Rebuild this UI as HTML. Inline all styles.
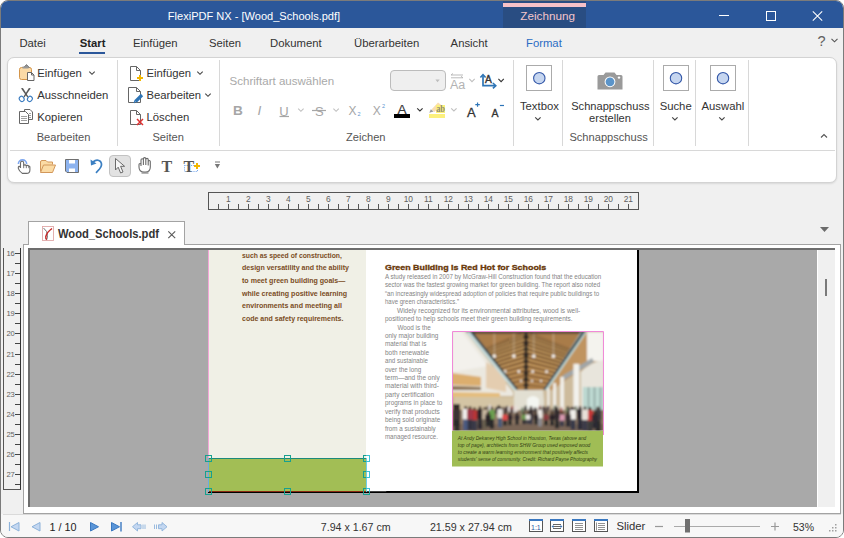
<!DOCTYPE html>
<html><head><meta charset="utf-8"><style>
html,body{margin:0;padding:0;width:844px;height:538px;overflow:hidden;background:#fff}
body{position:relative;font-family:'Liberation Sans', sans-serif}
.a{position:absolute}
.t{position:absolute;white-space:nowrap;line-height:1}
svg{overflow:visible}
</style></head><body>
<div class='a' style='left:0px;top:0px;width:844px;height:538px;background:#f0f0f0;border:1px solid #7b7b7b;box-sizing:border-box;border-radius:8px 8px 8px 8px'></div><div class='a' style='left:1px;top:1px;width:842px;height:27px;background:#2b579a;border-radius:7px 7px 0 0'></div><div class='a' style='left:503px;top:1px;width:83px;height:27px;background:#294d82'></div><div class='a' style='left:503px;top:3px;width:83px;height:4px;background:#f7c1c8'></div><div class='t' style="left:347.60px;width:400px;text-align:center;top:10.30px;font-size:11.7px;color:#f4c6cb;font-weight:400;">Zeichnung</div><div class='t' style="left:54.00px;width:400px;text-align:center;top:10.85px;font-size:11.05px;color:#ffffff;font-weight:400;">FlexiPDF NX - [Wood_Schools.pdf]</div><div class='a' style='left:719px;top:15px;width:10px;height:1px;background:#fff'></div><div class='a' style='left:766px;top:11px;width:9px;height:9px;border:1px solid #fff;box-sizing:border-box;width:10px;height:10px'></div><svg class='a' style='left:812px;top:11px;' width='11' height='11' viewBox='0 0 11 11'><path d='M0.8 0.3L10.2 9.7M10.2 0.3L0.8 9.7' stroke='#fff' stroke-width='1.05'/></svg><div class='t' style="left:19.40px;top:38.13px;font-size:11.3px;color:#333;font-weight:400;">Datei</div><div class='t' style="left:79.70px;top:38.13px;font-size:11.3px;color:#222;font-weight:700;">Start</div><div class='t' style="left:133.00px;top:38.13px;font-size:11.3px;color:#333;font-weight:400;">Einfügen</div><div class='t' style="left:209.00px;top:38.13px;font-size:11.3px;color:#333;font-weight:400;">Seiten</div><div class='t' style="left:270.10px;top:38.13px;font-size:11.3px;color:#333;font-weight:400;">Dokument</div><div class='t' style="left:354.00px;top:38.13px;font-size:11.3px;color:#333;font-weight:400;">Überarbeiten</div><div class='t' style="left:450.60px;top:38.13px;font-size:11.3px;color:#333;font-weight:400;">Ansicht</div><div class='t' style="left:526.00px;top:38.13px;font-size:11.3px;color:#2b6cc4;font-weight:400;">Format</div><div class='a' style='left:79px;top:52px;width:26px;height:2px;background:#2b579a'></div><div class='t' style="left:817.60px;top:34.33px;font-size:14.5px;color:#606060;font-weight:400;">?</div><svg class='a' style='left:831px;top:38px;' width='7' height='5' viewBox='0 0 7 5'><path d='M0.5 0.8L3.5 3.8L6.5 0.8' fill='none' stroke='#555' stroke-width='1.1'/></svg><div class='a' style='left:7px;top:57px;width:830px;height:126px;background:#ffffff;border:1px solid #d3d3d3;box-sizing:border-box;border-radius:7px;box-shadow:0 1px 2px rgba(0,0,0,0.10)'></div><div class='a' style='left:117px;top:60px;width:1px;height:86px;background:#d8d8d8'></div><div class='a' style='left:219px;top:60px;width:1px;height:86px;background:#d8d8d8'></div><div class='a' style='left:513px;top:60px;width:1px;height:86px;background:#d8d8d8'></div><div class='a' style='left:562px;top:60px;width:1px;height:86px;background:#d8d8d8'></div><div class='a' style='left:653px;top:60px;width:1px;height:86px;background:#d8d8d8'></div><div class='a' style='left:695px;top:60px;width:1px;height:86px;background:#d8d8d8'></div><div class='a' style='left:748px;top:60px;width:1px;height:86px;background:#d8d8d8'></div><div class='a' style='left:10px;top:150px;width:825px;height:1px;background:#d8d8d8'></div><div class='t' style="left:37.30px;top:68.03px;font-size:11.3px;color:#333;font-weight:400;">Einfügen</div><div class='t' style="left:37.30px;top:89.93px;font-size:11.3px;color:#333;font-weight:400;">Ausschneiden</div><div class='t' style="left:37.30px;top:112.23px;font-size:11.3px;color:#333;font-weight:400;">Kopieren</div><div class='t' style="left:-136.50px;width:400px;text-align:center;top:131.90px;font-size:11.1px;color:#555;font-weight:400;">Bearbeiten</div><div class='t' style="left:146.50px;top:68.03px;font-size:11.3px;color:#333;font-weight:400;">Einfügen</div><div class='t' style="left:146.50px;top:89.93px;font-size:11.3px;color:#333;font-weight:400;">Bearbeiten</div><div class='t' style="left:146.50px;top:112.23px;font-size:11.3px;color:#333;font-weight:400;">Löschen</div><div class='t' style="left:-31.80px;width:400px;text-align:center;top:131.90px;font-size:11.1px;color:#555;font-weight:400;">Seiten</div><svg class='a' style='left:0px;top:0px;' width='844' height='538' viewBox='0 0 844 538'><path d='M89.3 71.6L92.0 74.3L94.7 71.6' fill='none' stroke='#444' stroke-width='1.1'/><path d='M197.3 71.6L200.0 74.3L202.70000000000002 71.6' fill='none' stroke='#444' stroke-width='1.1'/><path d='M205.3 93.6L208.0 96.3L210.70000000000002 93.6' fill='none' stroke='#444' stroke-width='1.1'/><rect x='19.5' y='67.5' width='12' height='12' rx='2' fill='#fbdaa6' stroke='#d49549'/><path d='M23.5 67.5 L26.5 64.5 L29.5 67.5 Z' fill='#8a8a8a' stroke='#777' stroke-width='0.8'/><rect x='22.5' y='66.5' width='6' height='2' fill='#999'/><path d='M27.5 72.5 H31.5 L34 75 V80.5 H27.5 Z' fill='#fff' stroke='#666'/><path d='M31.5 72.5 V75 H34' fill='none' stroke='#666'/><path d='M21 88.2 L22.9 88 L28.3 96.6 L27.4 97.4 Z' fill='#5a5a5a'/><path d='M30.8 88.2 L28.9 88 L23.5 96.6 L24.4 97.4 Z' fill='#5a5a5a'/><ellipse cx='21.7' cy='98.9' rx='2.3' ry='2.7' transform='rotate(-35 21.7 98.9)' fill='none' stroke='#3b7cc0' stroke-width='1.1'/><ellipse cx='29.9' cy='98.9' rx='2.3' ry='2.7' transform='rotate(35 29.9 98.9)' fill='none' stroke='#3b7cc0' stroke-width='1.1'/><path d='M24.5 109.5 H30 L32.5 112 V119.5 H24.5 Z' fill='#fff' stroke='#666'/><path d='M19.5 111.5 H25.5 L28.5 114.5 V123.5 H19.5 Z' fill='#fff' stroke='#666'/><path d='M21 116.5H27M21 118.5H27M21 120.5H27M29 113.5H31M29 115.5H31M29 117.5H31' stroke='#888' stroke-width='0.8'/><path d='M130.5 66.5 H136.5 L140.5 70.5 V80.5 H130.5 Z' fill='#fff' stroke='#666'/><path d='M136.5 66.5 V70.5 H140.5' fill='none' stroke='#666'/><path d='M137 78H143M140 75V81' stroke='#f2b600' stroke-width='2'/><path d='M128.5 87.5 H136.5 L140.5 91.5 V102.5 H128.5 Z' fill='#fff' stroke='#666'/><path d='M136.5 87.5 V91.5 H140.5' fill='none' stroke='#666'/><path d='M135.5 101.5 L142 95' stroke='#2e74b5' stroke-width='3.2'/><path d='M134 103 L135.5 100' stroke='#2e74b5' stroke-width='1.2'/><path d='M130.5 110.5 H136.5 L140.5 114.5 V124.5 H130.5 Z' fill='#fff' stroke='#666'/><path d='M136.5 110.5 V114.5 H140.5' fill='none' stroke='#666'/><path d='M137 119L143 125M143 119L137 125' stroke='#e03030' stroke-width='1.5'/></svg><div class='t' style="left:229.50px;top:75.82px;font-size:11.55px;color:#a9a9a9;font-weight:400;">Schriftart auswählen</div><div class='a' style='left:390px;top:70px;width:56px;height:21px;background:#efefef;border:1px solid #bcbcbc;box-sizing:border-box;border-radius:4px'></div><div class='t' style="left:165.80px;width:400px;text-align:center;top:131.90px;font-size:11.1px;color:#555;font-weight:400;">Zeichen</div><div class='t' style="left:233.00px;top:104.29px;font-size:13.6px;color:#a6a6a6;font-weight:700;">B</div><div class='t' style="left:257.50px;top:104.29px;font-size:13.6px;color:#a6a6a6;font-weight:400;font-style:italic;">I</div><div class='t' style="left:279.30px;top:104.80px;font-size:13px;color:#a6a6a6;font-weight:400;">U</div><div class='t' style="left:315.00px;top:104.80px;font-size:13px;color:#a6a6a6;font-weight:400;">S</div><div class='t' style="left:348.60px;top:104.84px;font-size:12px;color:#a6a6a6;font-weight:400;">X</div><div class='t' style="left:357.40px;top:112.14px;font-size:5.5px;color:#5b95d0;font-weight:400;">2</div><div class='t' style="left:372.80px;top:104.84px;font-size:12px;color:#a6a6a6;font-weight:400;">X</div><div class='t' style="left:382.00px;top:103.94px;font-size:5.5px;color:#5b95d0;font-weight:400;">2</div><div class='t' style="left:397.50px;top:103.19px;font-size:13.6px;color:#3a3a3a;font-weight:400;-webkit-text-stroke:0.15px #333;">A</div><div class='t' style="left:467.00px;top:106.30px;font-size:13px;color:#333;font-weight:400;-webkit-text-stroke:0.3px #333;">A</div><div class='t' style="left:491.40px;top:108.41px;font-size:10.5px;color:#333;font-weight:400;-webkit-text-stroke:0.3px #333;">A</div><div class='t' style="left:450.00px;top:79.02px;font-size:12.5px;color:#b3b3b3;font-weight:400;">Aa</div><div class='t' style="left:485.00px;top:74.77px;font-size:10.2px;color:#333;font-weight:400;-webkit-text-stroke:0.4px #333;">A</div><svg class='a' style='left:0px;top:0px;' width='844' height='538' viewBox='0 0 844 538'><path d='M279.5 116.5H289' stroke='#a6a6a6' stroke-width='1.2'/><path d='M312 110.5H326' stroke='#a6a6a6' stroke-width='1.2'/><path d='M298.2 108.6L300.9 111.3L303.59999999999997 108.6' fill='none' stroke='#c0c0c0' stroke-width='1.1'/><path d='M333.4 108.6L336.09999999999997 111.3L338.79999999999995 108.6' fill='none' stroke='#c0c0c0' stroke-width='1.1'/><path d='M469.3 78.9L472.0 81.60000000000001L474.7 78.9' fill='none' stroke='#c0c0c0' stroke-width='1.1'/><path d='M498.4 78.9L501.09999999999997 81.60000000000001L503.79999999999995 78.9' fill='none' stroke='#333' stroke-width='1.1'/><path d='M417.2 108.3L419.9 111.0L422.59999999999997 108.3' fill='none' stroke='#333' stroke-width='1.1'/><path d='M451.2 108.3L453.9 111.0L456.59999999999997 108.3' fill='none' stroke='#c0c0c0' stroke-width='1.1'/><path d='M435.4 79.6L439.7 79.6L437.55 82.2Z' fill='#bdbdbd'/><path d='M451 75H463M451 77.8H463M453 73.5L451 75M461 76.3L463 77.8' fill='none' stroke='#b3b3b3' stroke-width='0.9'/><path d='M483 75.5V85.7H495' fill='none' stroke='#2e75b6' stroke-width='1.7'/><path d='M480.4 77.6L483 74.6L485.6 77.6M492.9 83L495.8 85.7L492.9 88.4' fill='none' stroke='#2e75b6' stroke-width='1.6'/><rect x='394' y='114' width='16' height='4' fill='#000'/><path d='M431.5 109.5 L438 102.5 L441 104.8 L434.5 112 Z' fill='#f9deb0'/><path d='M429.3 112.8 L430.8 109.3 L433.6 111.6Z' fill='#9a9a9a'/><rect x='436' y='105' width='9' height='8' fill='#fcf07c'/><rect x='429' y='114' width='16' height='4' fill='#fcf07c'/><text x='436.2' y='112.3' textLength='8.8' lengthAdjust='spacingAndGlyphs' font-family='Liberation Serif' font-weight='700' font-size='9.6' fill='#8f8c72'>ab</text><path d='M475.3 104.6H479.8M477.55 102.4V106.8' stroke='#2c74b8' stroke-width='1.2'/><path d='M499.9 105.5H504' stroke='#2c74b8' stroke-width='1.2'/></svg><div class='a' style='left:526px;top:65px;width:26px;height:26px;border:1px solid #ababab;box-sizing:border-box;background:#fff'></div><div class='a' style='left:663px;top:65px;width:26px;height:26px;border:1px solid #ababab;box-sizing:border-box;background:#fff'></div><div class='a' style='left:710px;top:65px;width:26px;height:26px;border:1px solid #ababab;box-sizing:border-box;background:#fff'></div><svg class='a' style='left:0px;top:0px;' width='844' height='538' viewBox='0 0 844 538'><circle cx='539.3' cy='78.2' r='5.7' fill='#c6d6f0' stroke='#3458a8' stroke-width='1.1'/><circle cx='676' cy='78.2' r='5.7' fill='#c6d6f0' stroke='#3458a8' stroke-width='1.1'/><circle cx='723' cy='78.2' r='5.7' fill='#c6d6f0' stroke='#3458a8' stroke-width='1.1'/><path d='M535.2 117.3L537.9000000000001 120.0L540.6 117.3' fill='none' stroke='#444' stroke-width='1.1'/><path d='M672.2 117.3L674.9000000000001 120.0L677.6 117.3' fill='none' stroke='#444' stroke-width='1.1'/><path d='M719.2 117.3L721.9000000000001 120.0L724.6 117.3' fill='none' stroke='#444' stroke-width='1.1'/><path d='M821 137.5L824 134.5L827 137.5' fill='none' stroke='#555' stroke-width='1.1'/><path d='M597.5 76.5 Q597.5 75 599 75 H603.5 L605.5 72.5 H614.5 L616.5 75 H621 Q622.5 75 622.5 76.5 V89.5 H597.5 Z' fill='#9a9a9a'/><circle cx='610' cy='81.8' r='5.4' fill='#fff'/><circle cx='610' cy='81.8' r='4.4' fill='#5b94c9'/><circle cx='619' cy='77.6' r='1.2' fill='#fff'/></svg><div class='t' style="left:339.40px;width:400px;text-align:center;top:100.93px;font-size:11.3px;color:#333;font-weight:400;">Textbox</div><div class='t' style="left:410.40px;width:400px;text-align:center;top:101.10px;font-size:11.1px;color:#333;font-weight:400;">Schnappschuss</div><div class='t' style="left:410.00px;width:400px;text-align:center;top:113.40px;font-size:11.1px;color:#333;font-weight:400;">erstellen</div><div class='t' style="left:408.60px;width:400px;text-align:center;top:131.80px;font-size:11.1px;color:#555;font-weight:400;">Schnappschuss</div><div class='t' style="left:475.70px;width:400px;text-align:center;top:100.93px;font-size:11.3px;color:#333;font-weight:400;">Suche</div><div class='t' style="left:522.90px;width:400px;text-align:center;top:100.93px;font-size:11.3px;color:#333;font-weight:400;">Auswahl</div><div class='a' style='left:109px;top:155px;width:22px;height:22px;background:#e2e2e2;border:1px solid #c2c2c2;box-sizing:border-box;border-radius:4px'></div><svg class='a' style='left:0px;top:0px;' width='844' height='538' viewBox='0 0 844 538'><path d='M18.4 164 A4.1 4.1 0 0 1 26.6 164' fill='none' stroke='#7ea7ef' stroke-width='1.6'/><path d='M20.5 168 V163 Q20.5 161.2 22.1 161.2 Q23.7 161.2 23.7 163 V165.3 Q25.5 164.4 26.3 165.6 Q28 164.9 28.8 166.2 Q29.9 166 29.9 167.5 V170 Q29.9 173.4 26.5 173.4 H22.3 Q19.2 171.2 18.4 168.6 Q18 166.6 19.2 166.4 Q20 166.3 20.5 167.5' fill='#fff' stroke='#6a6a6a' stroke-width='1.1'/><path d='M23.7 165.3V168.2M26.3 165.6V168.2M28.8 166.2V168.2' stroke='#6a6a6a' stroke-width='0.9'/><path d='M40.5 171.5 V162 Q40.5 160.5 42 160.5 H46 L47.5 162 H52.5 V164.5' fill='#fbdba5' stroke='#d2975a'/><path d='M40.5 172.5 L43.5 165 H55.5 L52.5 172.5 Z' fill='#fbdba5' stroke='#d2975a'/><path d='M65.5 159.5 H78.5 V172.5 H67 L65.5 171 Z' fill='#8db3ef' stroke='#6f6f6f'/><rect x='69' y='160' width='6' height='3.5' fill='#fff'/><rect x='69' y='168.5' width='6' height='3.5' fill='#fff'/><path d='M93 162 Q97 158.5 100.5 161.5 Q103 165 99.5 169 L96 172.8' fill='none' stroke='#3b7fc2' stroke-width='1.7'/><path d='M90.5 159.5 L91 165.5 L96.5 163.5 Z' fill='#3b7fc2'/><path d='M115.5 158.5 V170 L118.2 167.2 L120.6 173 L123 172 L120.6 166.3 H124.6 Z' fill='#f6f6f6' stroke='#6a6a6a' stroke-width='1'/><path d='M141 166 V160 Q141 158.8 142.2 158.8 Q143.4 158.8 143.4 160 V165 V158.8 Q143.4 157.6 144.6 157.6 Q145.8 157.6 145.8 158.8 V165 V159.6 Q145.8 158.4 147 158.4 Q148.2 158.4 148.2 159.6 V165.5 V161.5 Q148.2 160.5 149.3 160.5 Q150.3 160.5 150.3 161.5 V167 Q150.3 172 145.5 172 H144 Q139 172 139 167 V164.5 Q139 163.5 140 163.5 Q141 163.5 141 164.8' fill='#fff' stroke='#6a6a6a' stroke-width='1.1'/><path d='M141.5 173 H148.5' stroke='#6a6a6a'/><rect x='184.5' y='165.5' width='13' height='6' fill='none' stroke='#5b95e8' stroke-width='0.9' stroke-dasharray='1 1.2'/><path d='M194 166H200M197 163V169' stroke='#f3b800' stroke-width='2'/><path d='M215 162H220' stroke='#777' stroke-width='1'/><path d='M214.8 164 H220 L217.4 168.5 Z' fill='#777'/></svg><div class='t' style="left:161.50px;top:159.06px;font-size:16px;color:#555;font-weight:700;font-family:'Liberation Serif',serif;">T</div><div class='t' style="left:183.50px;top:159.06px;font-size:16px;color:#555;font-weight:700;font-family:'Liberation Serif',serif;">T</div><svg class='a' style='left:0px;top:0px;' width='844' height='538' viewBox='0 0 844 538'><path d='M194.2 166H199.8M197 163.2V168.8' stroke='#f3b800' stroke-width='2'/></svg><div class='a' style='left:208px;top:192px;width:431px;height:18px;border:1px solid #555;border-bottom:1px solid #555;box-sizing:border-box'></div><svg class='a' style='left:0px;top:0px;' width='844' height='538' viewBox='0 0 844 538'><path d='M218.5 204V209M228.5 204V209M238.5 204V209M248.5 204V209M258.5 204V209M268.5 204V209M278.5 204V209M288.5 204V209M298.5 204V209M308.5 204V209M318.5 204V209M328.5 204V209M338.5 204V209M348.5 204V209M358.5 204V209M368.5 204V209M378.5 204V209M388.5 204V209M398.5 204V209M408.5 204V209M418.5 204V209M428.5 204V209M438.5 204V209M448.5 204V209M458.5 204V209M468.5 204V209M478.5 204V209M488.5 204V209M498.5 204V209M508.5 204V209M518.5 204V209M528.5 204V209M538.5 204V209M548.5 204V209M558.5 204V209M568.5 204V209M578.5 204V209M588.5 204V209M598.5 204V209M608.5 204V209M618.5 204V209M628.5 204V209' stroke='#555' stroke-width='1'/></svg><div class='t' style="left:28.30px;width:400px;text-align:center;top:194.99px;font-size:8.4px;color:#606060;font-weight:400;">1</div><div class='t' style="left:48.30px;width:400px;text-align:center;top:194.99px;font-size:8.4px;color:#606060;font-weight:400;">2</div><div class='t' style="left:68.30px;width:400px;text-align:center;top:194.99px;font-size:8.4px;color:#606060;font-weight:400;">3</div><div class='t' style="left:88.30px;width:400px;text-align:center;top:194.99px;font-size:8.4px;color:#606060;font-weight:400;">4</div><div class='t' style="left:108.30px;width:400px;text-align:center;top:194.99px;font-size:8.4px;color:#606060;font-weight:400;">5</div><div class='t' style="left:128.30px;width:400px;text-align:center;top:194.99px;font-size:8.4px;color:#606060;font-weight:400;">6</div><div class='t' style="left:148.30px;width:400px;text-align:center;top:194.99px;font-size:8.4px;color:#606060;font-weight:400;">7</div><div class='t' style="left:168.30px;width:400px;text-align:center;top:194.99px;font-size:8.4px;color:#606060;font-weight:400;">8</div><div class='t' style="left:188.30px;width:400px;text-align:center;top:194.99px;font-size:8.4px;color:#606060;font-weight:400;">9</div><div class='t' style="left:208.30px;width:400px;text-align:center;top:194.99px;font-size:8.4px;color:#606060;font-weight:400;">10</div><div class='t' style="left:228.30px;width:400px;text-align:center;top:194.99px;font-size:8.4px;color:#606060;font-weight:400;">11</div><div class='t' style="left:248.30px;width:400px;text-align:center;top:194.99px;font-size:8.4px;color:#606060;font-weight:400;">12</div><div class='t' style="left:268.30px;width:400px;text-align:center;top:194.99px;font-size:8.4px;color:#606060;font-weight:400;">13</div><div class='t' style="left:288.30px;width:400px;text-align:center;top:194.99px;font-size:8.4px;color:#606060;font-weight:400;">14</div><div class='t' style="left:308.30px;width:400px;text-align:center;top:194.99px;font-size:8.4px;color:#606060;font-weight:400;">15</div><div class='t' style="left:328.30px;width:400px;text-align:center;top:194.99px;font-size:8.4px;color:#606060;font-weight:400;">16</div><div class='t' style="left:348.30px;width:400px;text-align:center;top:194.99px;font-size:8.4px;color:#606060;font-weight:400;">17</div><div class='t' style="left:368.30px;width:400px;text-align:center;top:194.99px;font-size:8.4px;color:#606060;font-weight:400;">18</div><div class='t' style="left:388.30px;width:400px;text-align:center;top:194.99px;font-size:8.4px;color:#606060;font-weight:400;">19</div><div class='t' style="left:408.30px;width:400px;text-align:center;top:194.99px;font-size:8.4px;color:#606060;font-weight:400;">20</div><div class='t' style="left:428.30px;width:400px;text-align:center;top:194.99px;font-size:8.4px;color:#606060;font-weight:400;">21</div><svg class='a' style='left:820px;top:227px;' width='9' height='5' viewBox='0 0 9 5'><path d='M0 0H9L4.5 5Z' fill='#6b6b6b'/></svg><div class='a' style='left:23px;top:244px;width:818px;height:270px;background:#fff;border:1px solid #a3a3a3;box-sizing:border-box'></div><div class='a' style='left:28px;top:221px;width:157px;height:24px;background:#fff;border:1px solid #a3a3a3;border-bottom:none;box-sizing:border-box'></div><svg class='a' style='left:0px;top:0px;' width='844' height='538' viewBox='0 0 844 538'><rect x='42.5' y='226.5' width='11' height='14' fill='#fff' stroke='#e0a8a8' stroke-width='0.9'/><path d='M43.5 228 Q47.5 231 47.5 235.5 Q47.5 238 46.5 240' fill='none' stroke='#777' stroke-width='1'/><path d='M52 228.5 Q47 232 45.8 236.5 Q45.5 239 46.8 239.5' fill='none' stroke='#c62828' stroke-width='1.5'/><path d='M168.3 231.3L175.2 238.2M175.2 231.3L168.3 238.2' stroke='#5a5a5a' stroke-width='1.1'/></svg><svg class='a' style='left:0;top:0' width='844' height='538'><text x='58' y='237.8' textLength='101' lengthAdjust='spacingAndGlyphs' font-family='Liberation Sans' font-size='12.4' font-weight='700' font-style='normal' fill='#333'>Wood_Schools.pdf</text></svg><div class='a' style='left:3px;top:248px;width:18px;height:242px;border:1px solid #555;border-top:none;border-right:1px solid #333;box-sizing:border-box;background:#f0f0f0'></div><svg class='a' style='left:0px;top:0px;' width='844' height='538' viewBox='0 0 844 538'><path d='M15 253.5H20M15 263.5H20M15 273.5H20M15 283.5H20M15 293.5H20M15 303.5H20M15 313.5H20M15 323.5H20M15 333.5H20M15 343.5H20M15 354.5H20M15 364.5H20M15 374.5H20M15 384.5H20M15 394.5H20M15 404.5H20M15 414.5H20M15 424.5H20M15 434.5H20M15 444.5H20M15 454.5H20M15 464.5H20M15 474.5H20M15 484.5H20' stroke='#444' stroke-width='1'/></svg><div class='t' style="left:-189.40px;width:400px;text-align:center;top:250.47px;font-size:7.6px;color:#606060;font-weight:400;">16</div><div class='t' style="left:-189.40px;width:400px;text-align:center;top:270.47px;font-size:7.6px;color:#606060;font-weight:400;">17</div><div class='t' style="left:-189.40px;width:400px;text-align:center;top:290.47px;font-size:7.6px;color:#606060;font-weight:400;">18</div><div class='t' style="left:-189.40px;width:400px;text-align:center;top:310.47px;font-size:7.6px;color:#606060;font-weight:400;">19</div><div class='t' style="left:-189.40px;width:400px;text-align:center;top:330.47px;font-size:7.6px;color:#606060;font-weight:400;">20</div><div class='t' style="left:-189.40px;width:400px;text-align:center;top:351.47px;font-size:7.6px;color:#606060;font-weight:400;">21</div><div class='t' style="left:-189.40px;width:400px;text-align:center;top:371.47px;font-size:7.6px;color:#606060;font-weight:400;">22</div><div class='t' style="left:-189.40px;width:400px;text-align:center;top:391.47px;font-size:7.6px;color:#606060;font-weight:400;">23</div><div class='t' style="left:-189.40px;width:400px;text-align:center;top:411.47px;font-size:7.6px;color:#606060;font-weight:400;">24</div><div class='t' style="left:-189.40px;width:400px;text-align:center;top:431.47px;font-size:7.6px;color:#606060;font-weight:400;">25</div><div class='t' style="left:-189.40px;width:400px;text-align:center;top:451.47px;font-size:7.6px;color:#606060;font-weight:400;">26</div><div class='t' style="left:-189.40px;width:400px;text-align:center;top:471.47px;font-size:7.6px;color:#606060;font-weight:400;">27</div><div class='a' style='left:28px;top:248px;width:807px;height:259px;background:#a9a9a9;border-top:2px solid #6d6d6d;border-left:2px solid #6d6d6d;box-sizing:border-box'></div><div class='a' style='left:817px;top:250px;width:18px;height:257px;background:#f0f0f0;border-left:1px solid #fff;box-sizing:border-box'></div><div class='a' style='left:825px;top:279px;width:2px;height:17px;background:#7a7a7a'></div><div class='a' style='left:208px;top:250px;width:431px;height:243px;background:#fff;border-right:2px solid #000;border-bottom:2px solid #000;box-sizing:border-box'></div><div class='a' style='left:208px;top:250px;width:1px;height:241px;background:#f3a6d8'></div><div class='a' style='left:209px;top:250px;width:157px;height:208px;background:#f0f0e6'></div><svg class='a' style='left:0px;top:0px;' width='844' height='538' viewBox='0 0 844 538'><text x='242' y='258.1' textLength='99.89999999999998' lengthAdjust='spacingAndGlyphs' font-family='Liberation Sans' font-size='7.7' font-weight='700' font-style='normal' fill='#7b4d1e' >such as speed of construction,</text><text x='242' y='270' textLength='107' lengthAdjust='spacingAndGlyphs' font-family='Liberation Sans' font-size='7.7' font-weight='700' font-style='normal' fill='#7b4d1e' >design versatility and the ability</text><text x='242' y='283' textLength='103.30000000000001' lengthAdjust='spacingAndGlyphs' font-family='Liberation Sans' font-size='7.7' font-weight='700' font-style='normal' fill='#7b4d1e' >to meet green building goals—</text><text x='242' y='295.9' textLength='105.19999999999999' lengthAdjust='spacingAndGlyphs' font-family='Liberation Sans' font-size='7.7' font-weight='700' font-style='normal' fill='#7b4d1e' >while creating positive learning</text><text x='242' y='307.8' textLength='99.89999999999998' lengthAdjust='spacingAndGlyphs' font-family='Liberation Sans' font-size='7.7' font-weight='700' font-style='normal' fill='#7b4d1e' >environments and meeting all</text><text x='242' y='321.2' textLength='101.39999999999998' lengthAdjust='spacingAndGlyphs' font-family='Liberation Sans' font-size='7.7' font-weight='700' font-style='normal' fill='#7b4d1e' >code and safety requirements.</text><text x='385' y='270.3' textLength='161.2' lengthAdjust='spacingAndGlyphs' font-family='Liberation Sans' font-size='7.9' font-weight='900' font-style='normal' fill='#6a3a0c' stroke='#6a3a0c' stroke-width='0.35'>Green Building is Red Hot for Schools</text><text x='385' y='279.3' textLength='216.20000000000005' lengthAdjust='spacingAndGlyphs' font-family='Liberation Sans' font-size='7.2' font-weight='400' font-style='normal' fill='#848484' >A study released in 2007 by McGraw-Hill Construction found that the education</text><text x='385' y='287.0' textLength='215.20000000000005' lengthAdjust='spacingAndGlyphs' font-family='Liberation Sans' font-size='7.2' font-weight='400' font-style='normal' fill='#848484' >sector was the fastest growing market for green building. The report also noted</text><text x='385' y='295.9' textLength='214.20000000000005' lengthAdjust='spacingAndGlyphs' font-family='Liberation Sans' font-size='7.2' font-weight='400' font-style='normal' fill='#848484' >“an increasingly widespread adoption of policies that require public buildings to</text><text x='385' y='303.8' textLength='74' lengthAdjust='spacingAndGlyphs' font-family='Liberation Sans' font-size='7.2' font-weight='400' font-style='normal' fill='#848484' >have green characteristics.”</text><text x='397' y='312.9' textLength='183.29999999999995' lengthAdjust='spacingAndGlyphs' font-family='Liberation Sans' font-size='7.2' font-weight='400' font-style='normal' fill='#848484' >Widely recognized for its environmental attributes, wood is well-</text><text x='385' y='320.6' textLength='187.5' lengthAdjust='spacingAndGlyphs' font-family='Liberation Sans' font-size='7.2' font-weight='400' font-style='normal' fill='#848484' >positioned to help schools meet their green building requirements.</text><text x='397.4' y='329.5' textLength='33.400000000000034' lengthAdjust='spacingAndGlyphs' font-family='Liberation Sans' font-size='7.2' font-weight='400' font-style='normal' fill='#848484' >Wood is the</text><text x='385' y='338.0' textLength='53.39999999999998' lengthAdjust='spacingAndGlyphs' font-family='Liberation Sans' font-size='7.2' font-weight='400' font-style='normal' fill='#848484' >only major building</text><text x='385' y='346.29999999999995' textLength='41.39999999999998' lengthAdjust='spacingAndGlyphs' font-family='Liberation Sans' font-size='7.2' font-weight='400' font-style='normal' fill='#848484' >material that is</text><text x='385' y='354.7' textLength='44' lengthAdjust='spacingAndGlyphs' font-family='Liberation Sans' font-size='7.2' font-weight='400' font-style='normal' fill='#848484' >both renewable</text><text x='385' y='363.0' textLength='42.89999999999998' lengthAdjust='spacingAndGlyphs' font-family='Liberation Sans' font-size='7.2' font-weight='400' font-style='normal' fill='#848484' >and sustainable</text><text x='385' y='371.9' textLength='36.19999999999999' lengthAdjust='spacingAndGlyphs' font-family='Liberation Sans' font-size='7.2' font-weight='400' font-style='normal' fill='#848484' >over the long</text><text x='385' y='379.9' textLength='54.69999999999999' lengthAdjust='spacingAndGlyphs' font-family='Liberation Sans' font-size='7.2' font-weight='400' font-style='normal' fill='#848484' >term—and the only</text><text x='385' y='388.2' textLength='54' lengthAdjust='spacingAndGlyphs' font-family='Liberation Sans' font-size='7.2' font-weight='400' font-style='normal' fill='#848484' >material with third-</text><text x='385' y='396.59999999999997' textLength='49' lengthAdjust='spacingAndGlyphs' font-family='Liberation Sans' font-size='7.2' font-weight='400' font-style='normal' fill='#848484' >party certification</text><text x='385' y='404.9' textLength='57.39999999999998' lengthAdjust='spacingAndGlyphs' font-family='Liberation Sans' font-size='7.2' font-weight='400' font-style='normal' fill='#848484' >programs in place to</text><text x='385' y='413.79999999999995' textLength='54.69999999999999' lengthAdjust='spacingAndGlyphs' font-family='Liberation Sans' font-size='7.2' font-weight='400' font-style='normal' fill='#848484' >verify that products</text><text x='385' y='422.0' textLength='55.19999999999999' lengthAdjust='spacingAndGlyphs' font-family='Liberation Sans' font-size='7.2' font-weight='400' font-style='normal' fill='#848484' >being sold originate</text><text x='385' y='430.5' textLength='50.69999999999999' lengthAdjust='spacingAndGlyphs' font-family='Liberation Sans' font-size='7.2' font-weight='400' font-style='normal' fill='#848484' >from a sustainably</text><text x='385' y='438.79999999999995' textLength='53' lengthAdjust='spacingAndGlyphs' font-family='Liberation Sans' font-size='7.2' font-weight='400' font-style='normal' fill='#848484' >managed resource.</text><rect x='452' y='430.5' width='151' height='36' fill='#a0bd55'/><text x='457.8' y='439.7' textLength='128.40000000000003' lengthAdjust='spacingAndGlyphs' font-family='Liberation Sans' font-size='6.1' font-weight='400' font-style='italic' fill='#334116' >At Andy Dekaney High School in Houston, Texas (above and</text><text x='457.8' y='446.9' textLength='132.49999999999994' lengthAdjust='spacingAndGlyphs' font-family='Liberation Sans' font-size='6.1' font-weight='400' font-style='italic' fill='#334116' >top of page), architects from SHW Group used exposed wood</text><text x='457.8' y='454.1' textLength='130.2' lengthAdjust='spacingAndGlyphs' font-family='Liberation Sans' font-size='6.1' font-weight='400' font-style='italic' fill='#334116' >to create a warm learning environment that positively affects</text><text x='457.8' y='461.3' textLength='139.2' lengthAdjust='spacingAndGlyphs' font-family='Liberation Sans' font-size='6.1' font-weight='400' font-style='italic' fill='#334116' >students' sense of community. Credit: Richard Payne Photography</text></svg><svg class='a' style='left:0px;top:0px;' width='844' height='538' viewBox='0 0 844 538'><defs><clipPath id='pc'><rect x='453' y='332' width='150' height='98.5'/></clipPath><clipPath id='cc'><polygon points='471,332 582,332 543,390 515,390'/></clipPath><filter id='bl' x='440' y='320' width='180' height='125' filterUnits='userSpaceOnUse'><feGaussianBlur stdDeviation='0.9'/></filter></defs><g clip-path='url(#pc)'><g filter='url(#bl)'><rect x='450' y='330' width='156' height='102' fill='#c8b08a'/><g clip-path='url(#cc)'><rect x='460' y='330' width='130' height='62' fill='#a97c4a'/><path d='M484.7 350.0 L526 333.0 L569.9 350.0' fill='none' stroke='#674526' stroke-width='2.80'/><path d='M484.9 350.3 L526 333.9 L569.7 350.3' fill='none' stroke='#d2a86a' stroke-width='2.24'/><path d='M485.4 351.0 L526 335.1 L569.3 351.0' fill='none' stroke='#674526' stroke-width='2.63'/><path d='M486.0 351.8 L526 336.5 L568.7 351.8' fill='none' stroke='#d2a86a' stroke-width='2.10'/><path d='M486.7 352.7 L526 338.0 L568.1 352.7' fill='none' stroke='#674526' stroke-width='2.46'/><path d='M487.5 353.7 L526 339.6 L567.4 353.7' fill='none' stroke='#d2a86a' stroke-width='1.97'/><path d='M488.3 354.9 L526 341.3 L566.6 354.9' fill='none' stroke='#674526' stroke-width='2.29'/><path d='M489.2 356.0 L526 343.1 L565.8 356.0' fill='none' stroke='#d2a86a' stroke-width='1.83'/><path d='M490.2 357.3 L526 344.9 L565.0 357.3' fill='none' stroke='#674526' stroke-width='2.12'/><path d='M491.2 358.6 L526 346.8 L564.1 358.6' fill='none' stroke='#d2a86a' stroke-width='1.70'/><path d='M492.2 360.0 L526 348.8 L563.2 360.0' fill='none' stroke='#674526' stroke-width='1.95'/><path d='M493.3 361.4 L526 350.7 L562.2 361.4' fill='none' stroke='#d2a86a' stroke-width='1.56'/><path d='M494.4 362.9 L526 352.8 L561.3 362.9' fill='none' stroke='#674526' stroke-width='1.78'/><path d='M495.6 364.4 L526 354.9 L560.2 364.4' fill='none' stroke='#d2a86a' stroke-width='1.43'/><path d='M496.7 365.9 L526 357.0 L559.2 365.9' fill='none' stroke='#674526' stroke-width='1.62'/><path d='M497.9 367.5 L526 359.1 L558.1 367.5' fill='none' stroke='#d2a86a' stroke-width='1.29'/><path d='M499.2 369.1 L526 361.3 L557.0 369.1' fill='none' stroke='#674526' stroke-width='1.45'/><path d='M500.4 370.8 L526 363.6 L555.9 370.8' fill='none' stroke='#d2a86a' stroke-width='1.16'/><path d='M501.7 372.5 L526 365.8 L554.8 372.5' fill='none' stroke='#674526' stroke-width='1.28'/><path d='M503.0 374.2 L526 368.1 L553.6 374.2' fill='none' stroke='#d2a86a' stroke-width='1.02'/><path d='M504.3 375.9 L526 370.5 L552.5 375.9' fill='none' stroke='#674526' stroke-width='1.11'/><path d='M505.7 377.7 L526 372.8 L551.3 377.7' fill='none' stroke='#d2a86a' stroke-width='0.89'/><path d='M507.0 379.5 L526 375.2 L550.1 379.5' fill='none' stroke='#674526' stroke-width='0.94'/><path d='M508.4 381.3 L526 377.6 L548.8 381.3' fill='none' stroke='#d2a86a' stroke-width='0.75'/><path d='M509.8 383.2 L526 380.0 L547.6 383.2' fill='none' stroke='#674526' stroke-width='0.77'/><path d='M511.3 385.1 L526 382.5 L546.3 385.1' fill='none' stroke='#d2a86a' stroke-width='0.62'/><path d='M512.7 387.0 L526 385.0 L545.0 387.0' fill='none' stroke='#674526' stroke-width='0.60'/><path d='M514.2 388.9 L526 387.5 L543.7 388.9' fill='none' stroke='#d2a86a' stroke-width='0.48'/><rect x='524.6' y='333' width='2.8' height='57' fill='#2e2a26'/><rect x='523.5' y='336' width='5' height='2.2' fill='#222'/><rect x='523.5' y='342' width='5' height='2.2' fill='#222'/><rect x='523.5' y='348' width='5' height='2.2' fill='#222'/><rect x='523.5' y='354' width='5' height='2.2' fill='#222'/><rect x='523.5' y='360' width='5' height='2.2' fill='#222'/><rect x='523.5' y='366' width='5' height='2.2' fill='#222'/><rect x='523.5' y='372' width='5' height='2.2' fill='#222'/><rect x='523.5' y='378' width='5' height='2.2' fill='#222'/><rect x='523.5' y='384' width='5' height='2.2' fill='#222'/></g><line x1='494.3' y1='333' x2='494.3' y2='356.2' stroke='#e8dcc8' stroke-width='0.5'/><line x1='513.9' y1='333' x2='513.9' y2='356.2' stroke='#e8dcc8' stroke-width='0.5'/><line x1='533.8' y1='333' x2='533.8' y2='356.2' stroke='#e8dcc8' stroke-width='0.5'/><line x1='553.4' y1='333' x2='553.4' y2='356.2' stroke='#e8dcc8' stroke-width='0.5'/><circle cx='494.3' cy='356.2' r='1.6' fill='#ffffff'/><circle cx='513.9' cy='356.2' r='1.6' fill='#ffffff'/><circle cx='533.8' cy='356.2' r='1.6' fill='#ffffff'/><circle cx='553.4' cy='356.2' r='1.6' fill='#ffffff'/><circle cx='505.1' cy='371.6' r='1.3' fill='#ffffff'/><circle cx='518.8' cy='371.6' r='1.3' fill='#ffffff'/><circle cx='532.7' cy='371.6' r='1.3' fill='#ffffff'/><circle cx='546.6' cy='371.6' r='1.3' fill='#ffffff'/><circle cx='521' cy='381' r='1' fill='#ffffff'/><circle cx='532' cy='381' r='1' fill='#ffffff'/><circle cx='541' cy='381' r='1' fill='#ffffff'/><rect x='466' y='331' width='120' height='2.5' fill='#3c3834'/><polygon points='452,331 465,331 513,392 513,396 452,396' fill='#ebe8df'/><polygon points='452,331 461,331 488,366 452,372' fill='#f3f1ec'/><polygon points='486,362 506,374 506,392 486,388' fill='#e4cdb0'/><polygon points='466,332 471,332 517,389 514,391' fill='#c6dcdc'/><polygon points='470,332 473,332 518,389 516.5,390' fill='#34444a'/><polygon points='452,373 481,377 481,386 452,385' fill='#dcae6e'/><polygon points='452,386 481,387 481,390 452,390' fill='#8a7050'/><polygon points='452,392 500,393 500,397.5 452,397' fill='#e4bd7e'/><polygon points='478,398 521,400 521,403.5 478,403' fill='#dcb474'/><rect x='454' y='397' width='66' height='12' fill='#d4c4a4'/><rect x='514' y='390' width='30' height='20' fill='#e2dfd2'/><path d='M527 409 V399 Q533 393 539 399 V409 Z' fill='#f4f6f2'/><polygon points='582,332 604,332 604,412 545,412 543,390' fill='#cdbb9c'/><polygon points='581,332 587,332 547,390 544,390' fill='#c0dcdc'/><polygon points='582,332 585,332 545,390 543,390' fill='#2c3e48'/><polygon points='587,332 604,332 604,356 566,380 552,390 548,390' fill='#c09460'/><polygon points='587,332 604,332 604,361 587,361' fill='#f4f3ee'/><polygon points='562,376 592,358 594,362 564,380' fill='#a0a6a8'/><path d='M581 420 V372 Q590 362 604 360 V420 Z' fill='#e8e5dc'/><rect x='583' y='387' width='21' height='32' fill='#bcd8d0'/><rect x='588' y='387' width='0.8' height='32' fill='#607070'/><rect x='594' y='387' width='0.8' height='32' fill='#607070'/><rect x='600' y='387' width='0.8' height='32' fill='#607070'/><rect x='573.4' y='363.8' width='5.9' height='50.19999999999999' fill='#f2f1ec'/><rect x='560.3' y='376.9' width='3.6' height='37.10000000000002' fill='#f2f1ec'/><rect x='553.2' y='383' width='2.8' height='31' fill='#f2f1ec'/><rect x='547.3' y='388' width='2.2' height='26' fill='#f2f1ec'/><rect x='452' y='410' width='152' height='22' fill='#8e7864'/><rect x='452' y='424' width='152' height='8' fill='#7a6656'/><rect x='453' y='404' width='7' height='22' fill='#2a2a2a'/><ellipse cx='507.2' cy='408.3' rx='1.1' ry='2.8' fill='#3a3034'/><ellipse cx='487.8' cy='409.6' rx='1.1' ry='3.8' fill='#3a3034'/><ellipse cx='506.0' cy='409.6' rx='1.1' ry='2.8' fill='#3a3034'/><ellipse cx='509.6' cy='410.8' rx='0.9' ry='3.4' fill='#e8e0da'/><ellipse cx='558.0' cy='408.6' rx='1.1' ry='3.4' fill='#6a7a60'/><ellipse cx='572.5' cy='410.5' rx='1.1' ry='3.6' fill='#e8e0da'/><ellipse cx='546.5' cy='409.5' rx='1.0' ry='3.2' fill='#3a3034'/><ellipse cx='571.0' cy='410.5' rx='1.5' ry='3.6' fill='#3a3034'/><ellipse cx='567.8' cy='409.7' rx='1.4' ry='3.6' fill='#2e2a2c'/><ellipse cx='503.6' cy='409.3' rx='1.1' ry='3.1' fill='#5a4a48'/><ellipse cx='513.5' cy='410.4' rx='0.9' ry='2.7' fill='#6a7a60'/><ellipse cx='575.8' cy='409.6' rx='1.3' ry='3.4' fill='#5a4a48'/><ellipse cx='575.8' cy='408.6' rx='1.1' ry='2.8' fill='#6a7a60'/><ellipse cx='525.7' cy='408.6' rx='1.2' ry='3.3' fill='#6a7a60'/><ellipse cx='536.3' cy='410.7' rx='1.0' ry='2.7' fill='#5a4a48'/><ellipse cx='511.0' cy='409.7' rx='1.4' ry='2.7' fill='#5a4a48'/><ellipse cx='512.2' cy='408.1' rx='1.1' ry='2.7' fill='#e8e0da'/><ellipse cx='552.1' cy='410.9' rx='0.9' ry='2.9' fill='#5a4a48'/><ellipse cx='555.8' cy='409.2' rx='1.5' ry='3.3' fill='#3a3034'/><ellipse cx='512.4' cy='408.6' rx='1.2' ry='2.8' fill='#a04040'/><ellipse cx='539.9' cy='408.5' rx='1.2' ry='3.0' fill='#a04040'/><ellipse cx='501.3' cy='410.4' rx='1.1' ry='2.9' fill='#3a3034'/><ellipse cx='525.5' cy='408.6' rx='1.4' ry='2.7' fill='#3a3034'/><ellipse cx='491.0' cy='408.5' rx='1.3' ry='2.8' fill='#3a3034'/><ellipse cx='535.2' cy='409.7' rx='1.1' ry='2.6' fill='#2e2a2c'/><ellipse cx='512.4' cy='411.0' rx='1.3' ry='2.8' fill='#5a4a48'/><ellipse cx='507.8' cy='409.2' rx='0.9' ry='3.1' fill='#5a4a48'/><ellipse cx='544.3' cy='409.3' rx='1.0' ry='2.8' fill='#3a3034'/><ellipse cx='508.9' cy='408.7' rx='1.0' ry='2.9' fill='#e8e0da'/><ellipse cx='498.8' cy='408.2' rx='1.5' ry='3.3' fill='#2e2a2c'/><ellipse cx='522.3' cy='410.7' rx='1.3' ry='3.5' fill='#6a7a60'/><ellipse cx='489.6' cy='409.2' rx='1.2' ry='3.7' fill='#2e2a2c'/><ellipse cx='567.0' cy='410.8' rx='1.1' ry='3.4' fill='#6a7a60'/><ellipse cx='514.4' cy='409.3' rx='1.0' ry='3.6' fill='#e8e0da'/><ellipse cx='516.5' cy='409.2' rx='1.2' ry='3.6' fill='#e8e0da'/><ellipse cx='572.6' cy='410.0' rx='0.9' ry='3.7' fill='#5a4a48'/><ellipse cx='555.0' cy='408.8' rx='1.4' ry='3.6' fill='#6a7a60'/><ellipse cx='543.2' cy='409.7' rx='1.3' ry='3.7' fill='#5a4a48'/><ellipse cx='557.8' cy='408.6' rx='1.0' ry='3.3' fill='#e8e0da'/><ellipse cx='496.4' cy='410.4' rx='1.4' ry='3.7' fill='#2e2a2c'/><ellipse cx='490.8' cy='410.9' rx='1.0' ry='3.3' fill='#2e2a2c'/><ellipse cx='555.6' cy='409.4' rx='1.2' ry='2.6' fill='#3a3034'/><ellipse cx='548.6' cy='408.3' rx='1.2' ry='2.9' fill='#5a4a48'/><ellipse cx='489.7' cy='408.2' rx='1.4' ry='3.7' fill='#e8e0da'/><ellipse cx='561.4' cy='410.5' rx='1.0' ry='3.3' fill='#a04040'/><rect x='462.6' y='408.7' width='6.2' height='10.8' rx='1.2' fill='#f0eeec'/><rect x='463.2' y='419.6' width='5.0' height='10.9' fill='#4a5a80'/><circle cx='465.7' cy='407.5' r='1.6' fill='#3a2a22'/><rect x='471.5' y='409.9' width='6.0' height='10.4' rx='1.2' fill='#b83434'/><rect x='472.1' y='420.3' width='4.8' height='10.4' fill='#3a3a48'/><circle cx='474.5' cy='408.7' r='1.5' fill='#3a2a22'/><rect x='477.1' y='409.0' width='5.8' height='10.2' rx='1.2' fill='#2a2428'/><rect x='477.7' y='419.2' width='4.6' height='10.1' fill='#2a2a30'/><circle cx='480.0' cy='407.8' r='1.5' fill='#3a2a22'/><rect x='482.2' y='409.5' width='5.7' height='10.0' rx='1.2' fill='#c8b8a0'/><rect x='482.8' y='419.5' width='4.5' height='9.8' fill='#6a6050'/><circle cx='485.0' cy='408.3' r='1.5' fill='#3a2a22'/><rect x='489.2' y='409.7' width='5.5' height='9.6' rx='1.2' fill='#6aa050'/><rect x='489.8' y='419.3' width='4.3' height='9.4' fill='#2a2a2a'/><circle cx='492.0' cy='408.5' r='1.4' fill='#3a2a22'/><rect x='497.4' y='409.0' width='5.3' height='9.3' rx='1.2' fill='#e8e4e0'/><rect x='498.0' y='418.3' width='4.1' height='8.9' fill='#4a5a78'/><circle cx='500.0' cy='407.8' r='1.4' fill='#3a2a22'/><rect x='507.5' y='414.4' width='5.0' height='5.9' rx='1.2' fill='#2e282c'/><rect x='508.1' y='420.3' width='3.8' height='4.8' fill='#2a2a2a'/><circle cx='510.0' cy='413.2' r='1.3' fill='#3a2a22'/><rect x='514.6' y='414.4' width='4.9' height='5.7' rx='1.2' fill='#302a2e'/><rect x='515.2' y='420.1' width='3.7' height='4.5' fill='#2a2a2a'/><circle cx='517.0' cy='413.2' r='1.3' fill='#3a2a22'/><rect x='521.7' y='414.4' width='4.7' height='5.4' rx='1.2' fill='#6a9a50'/><rect x='522.3' y='419.8' width='3.5' height='4.3' fill='#2a2a30'/><circle cx='524.0' cy='413.2' r='1.2' fill='#3a2a22'/><rect x='528.7' y='408.5' width='4.7' height='8.2' rx='1.2' fill='#3a3236'/><rect x='529.3' y='416.7' width='3.5' height='7.6' fill='#3a3a48'/><circle cx='531.0' cy='407.3' r='1.2' fill='#3a2a22'/><rect x='537.5' y='409.8' width='4.9' height='8.6' rx='1.2' fill='#eeeae6'/><rect x='538.1' y='418.4' width='3.7' height='8.1' fill='#8a8a90'/><circle cx='540.0' cy='408.6' r='1.3' fill='#3a2a22'/><rect x='549.4' y='414.4' width='5.2' height='6.1' rx='1.2' fill='#2a2428'/><rect x='550.0' y='420.5' width='4.0' height='5.1' fill='#2a2a2a'/><circle cx='552.0' cy='413.2' r='1.4' fill='#3a2a22'/><rect x='559.2' y='414.4' width='5.5' height='6.4' rx='1.2' fill='#d898b0'/><rect x='559.8' y='420.8' width='4.3' height='5.5' fill='#3a3a48'/><circle cx='562.0' cy='413.2' r='1.4' fill='#3a2a22'/><rect x='570.1' y='409.6' width='5.8' height='10.1' rx='1.2' fill='#f0eeea'/><rect x='570.7' y='419.7' width='4.6' height='10.0' fill='#34384a'/><circle cx='573.0' cy='408.4' r='1.5' fill='#3a2a22'/><rect x='577.0' y='408.9' width='6.0' height='10.5' rx='1.2' fill='#2e2a30'/><rect x='577.6' y='419.4' width='4.8' height='10.4' fill='#2a2a38'/><circle cx='580.0' cy='407.7' r='1.6' fill='#3a2a22'/><rect x='586.9' y='409.9' width='6.2' height='10.9' rx='1.2' fill='#c83838'/><rect x='587.5' y='420.8' width='5.0' height='11.0' fill='#3a3a3a'/><circle cx='590.0' cy='408.7' r='1.6' fill='#3a2a22'/><rect x='467.0' y='409.0' width='6.1' height='10.7' rx='1.2' fill='#a03848'/><rect x='467.6' y='419.7' width='4.9' height='10.6' fill='#303040'/><circle cx='470.0' cy='407.8' r='1.6' fill='#3a2a22'/><rect x='543.5' y='414.4' width='5.1' height='5.9' rx='1.2' fill='#8a3a40'/><rect x='544.1' y='420.3' width='3.9' height='4.9' fill='#2a2a2a'/><circle cx='546.0' cy='413.2' r='1.3' fill='#3a2a22'/><rect x='502.4' y='414.4' width='5.2' height='6.0' rx='1.2' fill='#e04848'/><rect x='503.0' y='420.4' width='4.0' height='5.0' fill='#2a2a2a'/><circle cx='505.0' cy='413.2' r='1.3' fill='#3a2a22'/><rect x='594.8' y='409.5' width='6.5' height='11.3' rx='1.2' fill='#3a3a40'/><rect x='595.4' y='420.8' width='5.3' height='11.4' fill='#2a2a2a'/><circle cx='598.0' cy='408.3' r='1.7' fill='#3a2a22'/><rect x='453.8' y='409.1' width='6.4' height='11.2' rx='1.2' fill='#3a3236'/><rect x='454.4' y='420.3' width='5.2' height='11.3' fill='#2a2a2a'/><circle cx='457.0' cy='407.9' r='1.7' fill='#3a2a22'/><rect x='533.6' y='414.4' width='4.8' height='5.6' rx='1.2' fill='#2a2428'/><rect x='534.2' y='420.0' width='3.6' height='4.5' fill='#2a2a2a'/><circle cx='536.0' cy='413.2' r='1.3' fill='#3a2a22'/><rect x='565.2' y='414.4' width='5.7' height='6.6' rx='1.2' fill='#3a3236'/><rect x='565.8' y='421.0' width='4.5' height='5.7' fill='#2a2a30'/><circle cx='568.0' cy='413.2' r='1.5' fill='#3a2a22'/><rect x='581.9' y='409.3' width='6.1' height='10.7' rx='1.2' fill='#e8e0d8'/><rect x='582.5' y='420.0' width='4.9' height='10.7' fill='#3a3a48'/><circle cx='585.0' cy='408.1' r='1.6' fill='#3a2a22'/><rect x='485.2' y='414.4' width='5.6' height='6.5' rx='1.2' fill='#2a2428'/><rect x='485.8' y='420.9' width='4.4' height='5.6' fill='#2a2a2a'/><circle cx='488.0' cy='413.2' r='1.5' fill='#3a2a22'/><rect x='525.7' y='414.4' width='4.6' height='5.4' rx='1.2' fill='#e8e4e0'/><rect x='526.3' y='419.8' width='3.4' height='4.2' fill='#3a3a48'/><circle cx='528.0' cy='413.2' r='1.2' fill='#3a2a22'/><rect x='554.3' y='409.8' width='5.4' height='9.4' rx='1.2' fill='#302a2e'/><rect x='554.9' y='419.2' width='4.2' height='9.1' fill='#2a2a2a'/><circle cx='557.0' cy='408.6' r='1.4' fill='#3a2a22'/><rect x='591.8' y='414.4' width='6.4' height='7.4' rx='1.2' fill='#2e2a30'/><rect x='592.4' y='421.8' width='5.2' height='6.7' fill='#2a2a30'/><circle cx='595.0' cy='413.2' r='1.7' fill='#3a2a22'/></g></g><path d='M452.5 430.5 V331.5 H603.5 V435' fill='none' stroke='#f08ad8' stroke-width='1'/></svg><div class='a' style='left:208px;top:458px;width:158px;height:33px;background:#a2be55'></div><svg class='a' style='left:0px;top:0px;' width='844' height='538' viewBox='0 0 844 538'><path d='M208.5 458.5H366' stroke='#1c8a7a' stroke-width='1'/><path d='M208 491.5H366' stroke='#8a2a10' stroke-width='1'/><path d='M208 492.5H639' stroke='#000' stroke-width='1'/><path d='M208.5 458V492' stroke='#6aaee0' stroke-width='1'/><path d='M366.5 458V492' stroke='#3cc0e0' stroke-width='1'/><defs><clipPath id='hg'><rect x='366.5' y='450' width='20' height='41.5'/></clipPath></defs><rect x='205.5' y='455.5' width='6' height='6' fill='none' stroke='#17a08f' stroke-width='1'/><rect x='205.5' y='471.5' width='6' height='6' fill='none' stroke='#17a08f' stroke-width='1'/><rect x='205.5' y='488.5' width='6' height='6' fill='none' stroke='#17a08f' stroke-width='1'/><rect x='284.5' y='455.5' width='6' height='6' fill='none' stroke='#17a08f' stroke-width='1'/><rect x='284.5' y='488.5' width='6' height='6' fill='none' stroke='#17a08f' stroke-width='1'/><rect x='363.5' y='455.5' width='6' height='6' fill='none' stroke='#17a08f' stroke-width='1'/><rect x='363.5' y='471.5' width='6' height='6' fill='none' stroke='#17a08f' stroke-width='1'/><rect x='363.5' y='488.5' width='6' height='6' fill='none' stroke='#17a08f' stroke-width='1'/><g clip-path='url(#hg)'><rect x='366.5' y='450' width='20' height='41.5' fill='#fff'/><rect x='205.5' y='455.5' width='6' height='6' fill='none' stroke='#3cc4d8' stroke-width='1'/><rect x='205.5' y='471.5' width='6' height='6' fill='none' stroke='#3cc4d8' stroke-width='1'/><rect x='205.5' y='488.5' width='6' height='6' fill='none' stroke='#3cc4d8' stroke-width='1'/><rect x='284.5' y='455.5' width='6' height='6' fill='none' stroke='#3cc4d8' stroke-width='1'/><rect x='284.5' y='488.5' width='6' height='6' fill='none' stroke='#3cc4d8' stroke-width='1'/><rect x='363.5' y='455.5' width='6' height='6' fill='none' stroke='#3cc4d8' stroke-width='1'/><rect x='363.5' y='471.5' width='6' height='6' fill='none' stroke='#3cc4d8' stroke-width='1'/><rect x='363.5' y='488.5' width='6' height='6' fill='none' stroke='#3cc4d8' stroke-width='1'/></g></svg><div class='a' style='left:1px;top:514px;width:842px;height:23px;background:#f7f7f7;border-radius:0 0 7px 7px'></div><div class='a' style='left:3px;top:514px;width:838px;height:1px;background:#dadada'></div><svg class='a' style='left:0px;top:0px;' width='844' height='538' viewBox='0 0 844 538'><path d='M9.5 522V531' stroke='#8db2da' stroke-width='1.2'/><path d='M19 522.5V531L11 526.75Z' fill='#c3d7f1' stroke='#8db2da' stroke-width='1'/><path d='M40 522.5V531L32 526.75Z' fill='#c3d7f1' stroke='#8db2da' stroke-width='1'/><path d='M90.5 522.5V531L98.5 526.75Z' fill='#5a95d8' stroke='#3a78c0' stroke-width='1'/><path d='M111.5 522.5V531L119.5 526.75Z' fill='#5a95d8' stroke='#3a78c0' stroke-width='1'/><path d='M121 522V531.5' stroke='#3a78c0' stroke-width='1.4'/><path d='M132.5 526.75L137.5 522.5V524.8H141V528.7H137.5V531Z' fill='#c3d7f1' stroke='#8db2da' stroke-width='0.9'/><path d='M143 524.5V529M145 524.5V529' stroke='#8db2da' stroke-width='0.9'/><path d='M167 526.75L162 522.5V524.8H158.5V528.7H162V531Z' fill='#c3d7f1' stroke='#8db2da' stroke-width='0.9'/><path d='M156.5 524.5V529M154.5 524.5V529' stroke='#8db2da' stroke-width='0.9'/><rect x='529.5' y='519.5' width='13' height='12' fill='#fff' stroke='#555' stroke-width='1'/><rect x='529' y='519' width='14' height='2' fill='#3a78c0'/><text x='531' y='530' font-family='Liberation Sans' font-size='7' fill='#2a5aa0'>1:1</text><rect x='550.5' y='519.5' width='13' height='12' fill='#fff' stroke='#555' stroke-width='1'/><rect x='550' y='519' width='14' height='2' fill='#3a78c0'/><path d='M553 524.5H561M553 526.5H561M553 528.5H561' stroke='#555' stroke-width='0.9'/><path d='M551.5 526.5L553.5 525V528Z M562.5 526.5L560.5 525V528Z' fill='#3a78c0'/><rect x='572.5' y='519.5' width='13' height='12' fill='#fff' stroke='#555' stroke-width='1'/><rect x='572' y='519' width='14' height='2' fill='#3a78c0'/><path d='M575 523.5H583M575 525.5H583M575 527.5H583M575 529.5H583' stroke='#777' stroke-width='0.8'/><rect x='594.5' y='519.5' width='13' height='12' fill='#fff' stroke='#555' stroke-width='1'/><rect x='594' y='519' width='14' height='2' fill='#3a78c0'/><path d='M596.5 522.5V530.5M598 523.5H605M598 525.5H605M598 527.5H605M598 529.5H605' stroke='#777' stroke-width='0.8'/><path d='M655 526.5H663' stroke='#999' stroke-width='1.2'/><path d='M674 526.5H760' stroke='#aaa' stroke-width='1'/><rect x='685' y='519' width='5' height='13.5' fill='#707070'/><path d='M771 526.5H779M775 522.5V530.5' stroke='#999' stroke-width='1.2'/><rect x='835' y='524' width='1.5' height='1.5' fill='#a0a0a0'/><rect x='832' y='527' width='1.5' height='1.5' fill='#a0a0a0'/><rect x='835' y='527' width='1.5' height='1.5' fill='#a0a0a0'/><rect x='829' y='530' width='1.5' height='1.5' fill='#a0a0a0'/><rect x='832' y='530' width='1.5' height='1.5' fill='#a0a0a0'/><rect x='835' y='530' width='1.5' height='1.5' fill='#a0a0a0'/></svg><div class='t' style="left:49.50px;top:522.06px;font-size:10.8px;color:#222;font-weight:400;">1 / 10</div><div class='t' style="left:320.80px;top:521.98px;font-size:10.65px;color:#333;font-weight:400;">7.94 x 1.67 cm</div><div class='t' style="left:429.90px;top:521.94px;font-size:10.7px;color:#333;font-weight:400;">21.59 x 27.94 cm</div><div class='t' style="left:616.50px;top:521.43px;font-size:11.3px;color:#333;font-weight:400;">Slider</div><div class='t' style="left:793.00px;top:522.11px;font-size:10.5px;color:#333;font-weight:400;">53%</div>
</body></html>
